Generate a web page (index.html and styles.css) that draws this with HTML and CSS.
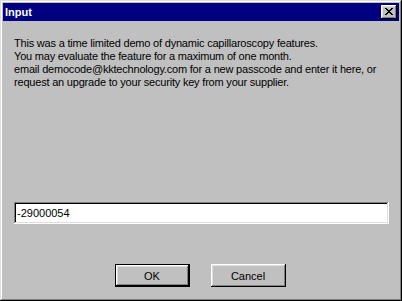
FILE: index.html
```html
<!DOCTYPE html>
<html lang="en">

<head>
    <meta charset="UTF-8">
    <title>Input</title>
    <link rel="stylesheet" href="styles.css">
</head>

<body>
    <div class="window">
        <div class="title-bar">
            <span class="title-text">Input</span>
            <button class="close-btn" aria-label="Close">
                <svg width="8" height="7" viewBox="0 0 8 7" shape-rendering="crispEdges">
                    <path d="M0 0h2v1H0zM6 0h2v1H6zM1 1h2v1H1zM5 1h2v1H5zM2 2h4v1H2zM3 3h2v1H3zM2 4h4v1H2zM1 5h2v1H1zM5 5h2v1H5zM0 6h2v1H0zM6 6h2v1H6z" fill="#000"/>
                </svg>
            </button>
        </div>
        <div class="dialog-body">
            <div class="message">
                This was a time limited demo of dynamic capillaroscopy features.<br>
                You may evaluate the feature for a maximum of one month.<br>
                email democode@kktechnology.com for a new passcode and enter it here, or<br>
                request an upgrade to your security key from your supplier.
            </div>
            <input class="passcode" type="text" value="-29000054">
            <div class="button-row">
                <button class="btn default">OK</button>
                <button class="btn">Cancel</button>
            </div>
        </div>
    </div>
</body>

</html>
```

FILE: styles.css
```css
body {
    margin: 0;
    font-family: "Liberation Sans", Arial, sans-serif;
    font-size: 11px;
    color: #000;
}

.window {
    width: 402px;
    height: 301px;
    box-sizing: border-box;
    padding: 3px;
    background-color: #c0c0c0;
    box-shadow: inset -1px -1px #000, inset 1px 1px #dfdfdf, inset -2px -2px #808080, inset 2px 2px #fff;
    display: flex;
    flex-direction: column;
}

.title-bar {
    height: 18px;
    background-color: #000080;
    display: flex;
    align-items: center;
    justify-content: space-between;
    padding: 0 2px;
}

.title-text {
    color: #fff;
    font-weight: bold;
    font-size: 11px;
}

.close-btn {
    width: 16px;
    height: 14px;
    padding: 0;
    border: none;
    background-color: #c0c0c0;
    box-shadow: inset -1px -1px #000, inset 1px 1px #fff, inset -2px -2px #808080, inset 2px 2px #dfdfdf;
    display: flex;
    align-items: center;
    justify-content: center;
}

.close-btn svg {
    display: block;
    margin-left: -1px;
    margin-top: -1px;
}

.dialog-body {
    flex: 1;
    display: flex;
    flex-direction: column;
    padding: 16px 10px 11px 11px;
}

.message {
    line-height: 13px;
    letter-spacing: -0.2px;
    white-space: nowrap;
    margin-bottom: auto;
}

.passcode {
    height: 22px;
    box-sizing: border-box;
    margin: 0;
    padding: 0 3px;
    border: none;
    background-color: #fff;
    font-family: inherit;
    font-size: 11px;
    color: #000;
    box-shadow: inset -1px -1px #fff, inset 1px 1px #808080, inset -2px -2px #dfdfdf, inset 2px 2px #000;
    outline: none;
}

.button-row {
    display: flex;
    justify-content: center;
    gap: 21px;
    margin-top: 40px;
    padding-right: 3px;
}

.btn {
    width: 75px;
    height: 23px;
    padding: 0;
    border: none;
    background-color: #c0c0c0;
    font-family: inherit;
    font-size: 11px;
    color: #000;
    box-shadow: inset -1px -1px #000, inset 1px 1px #fff, inset -2px -2px #808080, inset 2px 2px #dfdfdf;
}

.btn.default {
    box-shadow: inset 0 0 0 1px #000, inset -2px -2px #000, inset 2px 2px #fff, inset -3px -3px #808080, inset 3px 3px #dfdfdf;
}
```
